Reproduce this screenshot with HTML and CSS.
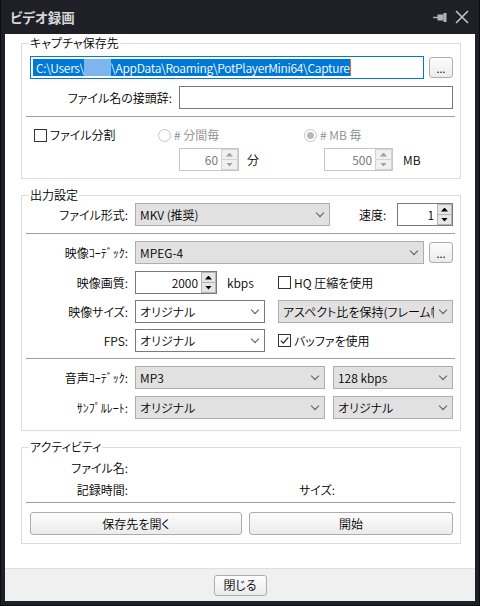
FILE: index.html
```html
<!DOCTYPE html>
<html lang="ja">
<head>
<meta charset="utf-8">
<title>ビデオ録画</title>
<link rel="stylesheet" href="styles.css">
</head>
<body>
<div class="window">
  <div class="titlebar">
    <span class="title">ビデオ録画</span>
    <span class="tb-icons">
      <svg class="pin" width="14" height="9" viewBox="0 0 14 9"><path d="M0 4.5H5" stroke="#b4b4b4" stroke-width="1.4"/><rect x="4.5" y="1.5" width="6" height="6" fill="#b4b4b4"/><rect x="10.5" y="0" width="3" height="9" fill="#b4b4b4"/></svg>
      <svg class="close" width="14" height="14" viewBox="0 0 14 14"><path d="M1 1L13 13M13 1L1 13" stroke="#c4c4c4" stroke-width="1.6"/></svg>
    </span>
  </div>
  <div class="client">
    <div class="main">
      <fieldset class="group g-capture">
        <legend>キャプチャ保存先</legend>
        <div class="row row-path">
          <div class="textbox focus"><span class="sel">C:\Users\<span class="redact"></span>\AppData\Roaming\PotPlayerMini64\Capture</span><span class="caret"></span></div>
          <button class="btn btn-dots">...</button>
        </div>
        <div class="row row-prefix">
          <span class="lbl lbl-prefix">ファイル名の接頭辞:</span>
          <div class="textbox grow"></div>
        </div>
        <div class="sep sep-1"></div>
        <div class="split">
          <span class="chk-line c1"><span class="chk"></span>ファイル分割</span>
          <span class="radio-line dis"><span class="radio"></span># 分間毎</span>
          <span class="radio-line dis"><span class="radio on"></span># MB 毎</span>
          <span></span>
          <span class="spin-line sl-min">
            <span class="spin dis w-min"><span class="spin-val">60</span><span class="spin-btns"><span class="sb"><i class="tri up"></i></span><span class="sb"><i class="tri dn"></i></span></span></span>
            <span class="unit-min">分</span>
          </span>
          <span class="spin-line sl-mb">
            <span class="spin dis w-mb"><span class="spin-val">500</span><span class="spin-btns"><span class="sb"><i class="tri up"></i></span><span class="sb"><i class="tri dn"></i></span></span></span>
            <span class="unit-mb">MB</span>
          </span>
        </div>
      </fieldset>

      <fieldset class="group g-output">
        <legend>出力設定</legend>
        <div class="row r-a">
          <span class="lbl lbl-main">ファイル形式:</span>
          <div class="combo gray w-format"><span class="val">MKV (推奨)</span></div>
          <span class="lbl-speed">速度:</span>
          <span class="spin w-speed"><span class="spin-val">1</span><span class="spin-btns"><span class="sb"><i class="tri up"></i></span><span class="sb"><i class="tri dn"></i></span></span></span>
        </div>
        <div class="sep sep-2"></div>
        <div class="row r-b">
          <span class="lbl lbl-main">映像ｺｰﾃﾞｯｸ:</span>
          <div class="combo gray w-vcodec"><span class="val">MPEG-4</span></div>
          <button class="btn btn-dots">...</button>
        </div>
        <div class="row r-c">
          <span class="lbl lbl-main">映像画質:</span>
          <span class="spin w-quality"><span class="spin-val">2000</span><span class="spin-btns"><span class="sb"><i class="tri up"></i></span><span class="sb"><i class="tri dn"></i></span></span></span>
          <span class="unit-kbps">kbps</span>
          <span class="chk-line"><span class="chk"></span>HQ 圧縮を使用</span>
        </div>
        <div class="row r-d">
          <span class="lbl lbl-main">映像サイズ:</span>
          <div class="combo white w-small"><span class="val">オリジナル</span></div>
          <div class="combo gray grow ml-13"><span class="val">アスペクト比を保持(フレーム幅)</span></div>
        </div>
        <div class="row r-e">
          <span class="lbl lbl-main">FPS:</span>
          <div class="combo white w-small"><span class="val">オリジナル</span></div>
          <span class="chk-line ml-13"><span class="chk"><svg width="11" height="11" viewBox="0 0 11 11"><path d="M1.8 5.6L4.3 8.1L9.3 2.4" fill="none" stroke="#222" stroke-width="1.2"/></svg></span>バッファを使用</span>
        </div>
        <div class="sep sep-3"></div>
        <div class="row r-f">
          <span class="lbl lbl-main">音声ｺｰﾃﾞｯｸ:</span>
          <div class="combo gray w-audio"><span class="val">MP3</span></div>
          <div class="combo gray grow ml-8"><span class="val">128 kbps</span></div>
        </div>
        <div class="row r-g">
          <span class="lbl lbl-main">ｻﾝﾌﾟﾙﾚｰﾄ:</span>
          <div class="combo gray w-audio"><span class="val">オリジナル</span></div>
          <div class="combo gray grow ml-8"><span class="val">オリジナル</span></div>
        </div>
      </fieldset>

      <fieldset class="group g-activity">
        <legend>アクティビティ</legend>
        <div class="row r-fn"><span class="lbl lbl-main">ファイル名:</span></div>
        <div class="row r-time"><span class="lbl lbl-main">記録時間:</span><span class="lbl-size">サイズ:</span></div>
        <div class="sep sep-4"></div>
        <div class="row r-btns">
          <button class="btn w-open">保存先を開く</button>
          <button class="btn grow">開始</button>
        </div>
      </fieldset>
    </div>
    <div class="footer">
      <button class="btn btn-close">閉じる</button>
    </div>
  </div>
</div>
</body>
</html>
```

FILE: styles.css
```css
* { box-sizing: border-box; }
html, body { margin: 0; padding: 0; }
body {
  width: 480px;
  height: 606px;
  overflow: hidden;
  background: #1f2027;
  font-family: "Noto Sans CJK JP", "Noto Sans", sans-serif;
  font-feature-settings: "palt" 1;
  font-weight: 350;
  font-size: 12px;
  line-height: 16px;
  color: #000;
}
.window {
  display: flex;
  flex-direction: column;
  height: 606px;
  padding: 0 5px 5px;
  background: #1f2027;
  box-shadow: inset 1px 0 0 #0c0c10, inset -1px 0 0 #0c0c10, inset 0 -1px 0 #0c0c10;
}
.titlebar {
  height: 34px;
  flex: none;
  display: flex;
  align-items: center;
  justify-content: space-between;
  padding: 0 6px 0 5px;
}
.title {
  color: #d6d6d6;
  font-weight: 700;
  font-size: 13.5px;
}
.tb-icons { display: flex; align-items: center; gap: 8px; }
.pin { margin-top: 1px; }

.client {
  flex: 1;
  display: flex;
  flex-direction: column;
  background: #fff;
}
.main { flex: 1; padding: 1px 14px 0 16px; }
.footer {
  height: 33px;
  flex: none;
  border-top: 1px solid #dfdfdf;
  background: #f0f0f0;
  display: flex;
  justify-content: center;
  align-items: center;
}

.group {
  margin: 0;
  min-width: 0;
  border: 1px solid #dcdcdc;
  padding: 0 7px 0 8px;
}
.group legend {
  padding: 0 1px;
  margin-left: -1px;
  line-height: 16px;
}
.g-capture { padding-bottom: 7px; }
.g-output { margin-top: 8px; padding-bottom: 11px; }
.g-activity { margin-top: 8px; padding-bottom: 8px; }

.row { display: flex; align-items: center; }
.row > * { flex: none; }
.row > .grow { flex: 1 1 0; min-width: 0; }
.lbl { text-align: right; white-space: nowrap; }
.lbl-main { width: 98px; margin-right: 7px; }
.lbl-prefix { width: 142px; margin-right: 7px; }
.ml-13 { margin-left: 13px; }
.ml-8 { margin-left: 8px; }

.sep { height: 1px; background: #a0a0a0; margin: 0 -2px 0 -4px; }

/* text boxes */
.textbox { height: 23px; border: 1px solid #7a7a7a; background: #fff; }
.textbox.focus {
  width: 394px;
  border-color: #0078d7;
  display: flex;
  align-items: center;
  padding-left: 2px;
  overflow: hidden;
}
.sel {
  background: #0078d7;
  color: #fff;
  padding-left: 3px;
  line-height: 17px;
  white-space: nowrap;
  letter-spacing: -0.28px;
}
.redact {
  display: inline-block;
  width: 27px;
  height: 17px;
  vertical-align: top;
  background: #7db5ef;
}
.caret { width: 1px; height: 17px; background: #d8742a; }

/* buttons */
.btn {
  font: inherit;
  color: #000;
  height: 23px;
  padding: 0;
  border: 1px solid #adadad;
  border-radius: 3px;
  background: linear-gradient(#fdfdfd, #ebebeb);
}
.btn-dots { width: 24px; height: 21px; line-height: 14px; font-size: 11px; }
.row > .btn-dots { margin-left: auto; }
.btn-close { width: 53px; height: 21px; line-height: 18px; }
.w-open { width: 212px; margin-right: 7px; }

/* combos */
.combo {
  display: flex;
  align-items: center;
  height: 23px;
  border: 1px solid #adadad;
  padding: 0 6px 0 4px;
  white-space: nowrap;
}
.combo.gray { background: #e1e1e1; }
.combo.white { background: #fff; border-color: #7a7a7a; }
.combo .val { flex: 1 1 0; overflow: hidden; min-width: 0; }
.combo::after {
  content: "";
  flex: none;
  width: 5px;
  height: 5px;
  margin: -4px 0 0 6px;
  border-right: 1px solid #5a5a5a;
  border-bottom: 1px solid #5a5a5a;
  transform: rotate(45deg);
}
.w-format { width: 195px; }
.w-vcodec { width: 289px; }
.w-small { width: 130px; }
.w-audio { width: 190px; }

/* spin boxes */
.spin {
  display: flex;
  height: 23px;
  border: 1px solid #7a7a7a;
  background: #fff;
}
.spin-val { flex: 1; text-align: right; padding-right: 3px; line-height: 21px; }
.spin-btns { display: flex; flex-direction: column; width: 15px; flex: none; }
.sb {
  flex: 1;
  display: flex;
  align-items: center;
  justify-content: center;
  background: #e6e6e6;
  border: 1px solid #b4b4b4;
}
.sb + .sb { border-top: 0; }
.tri { display: block; width: 7px; height: 4px; background: #000; }
.tri.up { clip-path: polygon(50% 0, 100% 100%, 0 100%); }
.tri.dn { clip-path: polygon(0 0, 100% 0, 50% 100%); }
.spin.dis { border-color: #c6c6c6; }
.spin.dis .spin-val { color: #6d6d6d; }
.spin.dis .sb { background: #f0f0f0; border-color: #d2d2d2; }
.spin.dis .tri { background: #a0a0a0; }
.spin.dis .spin-btns { width: 17px; }
.w-min { width: 60px; margin-left: 21px; }
.w-mb { width: 69px; margin-left: 20px; }
.row > .w-speed { width: 56px; margin-left: auto; }
.w-quality { width: 82px; }
.unit-min { margin-left: 8px; }
.unit-mb { margin-left: 10px; }
.unit-kbps { width: 51px; margin-left: 10px; }
.lbl-speed { margin-left: 29px; }
.lbl-size { margin-left: 164px; }

/* checks / radios */
.chk-line, .radio-line { display: flex; align-items: center; white-space: nowrap; }
.chk {
  width: 13px;
  height: 13px;
  flex: none;
  border: 1px solid #333;
  background: #fff;
  margin-right: 3px;
  display: flex;
  align-items: center;
  justify-content: center;
}
.chk-line.c1 { margin-left: 4px; }
.radio {
  width: 13px;
  height: 13px;
  flex: none;
  border: 1px solid #c4c4c4;
  border-radius: 50%;
  background: #fff;
  margin-right: 3px;
  display: flex;
  align-items: center;
  justify-content: center;
}
.radio.on::after {
  content: "";
  width: 7px;
  height: 7px;
  border-radius: 50%;
  background: #b8b8b8;
}
.radio-line.dis { color: #8c8c8c; }

.split {
  display: grid;
  grid-template-columns: 128px 146px 1fr;
  grid-template-rows: 16px 23px;
  row-gap: 5px;
  margin-top: 10px;
}
.spin-line { display: flex; align-items: center; }

/* vertical rhythm */
.row-path { margin-top: 5px; }
.row-prefix { margin-top: 7px; }
.sep-1 { margin-top: 7px; }
.r-a { margin-top: 0; }
.sep-2 { margin-top: 7px; }
.r-b { margin-top: 7px; }
.r-c { margin-top: 7px; }
.r-d { margin-top: 6px; }
.r-e { margin-top: 6px; }
.sep-3 { margin-top: 6px; }
.r-f { margin-top: 7px; }
.r-g { margin-top: 7px; }
.r-fn { margin-top: 5px; }
.r-time { margin-top: 6px; }
.sep-4 { margin-top: 4px; }
.r-btns { margin-top: 9px; }
```
